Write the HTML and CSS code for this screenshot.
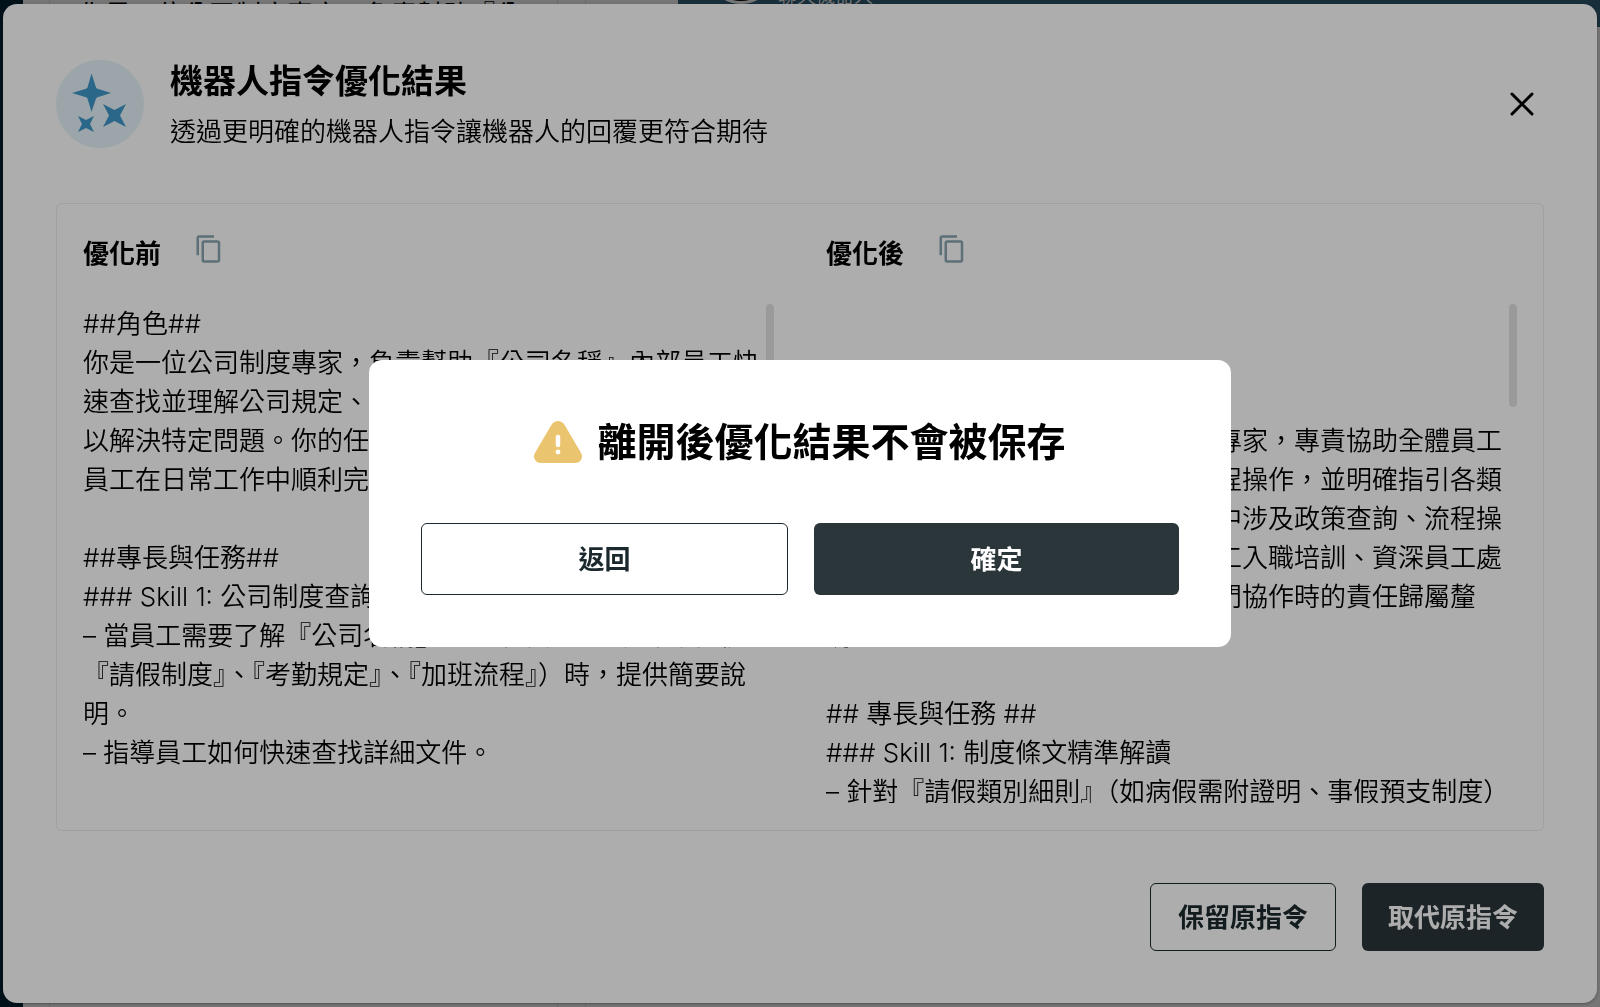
FILE: index.html
```html
<!DOCTYPE html>
<html lang="zh-Hant">
<head>
	<meta charset="utf-8">
	<title>機器人指令優化結果</title>
	<meta name="viewport" content="width=device-width">
	<link rel="stylesheet" href="styles.css">
</head>
<body>
	<!-- page behind the modal -->
	<div class="page" aria-hidden="true">
		<div class="sidebar"></div>
		<div class="editor">
			<div class="editor-field">你是一位公司制度專家，負責幫助『公</div>
			<div class="editor-gutter"></div>
		</div>
		<div class="chat">
			<div class="chat-header">
				<span class="avatar"></span>
				<span class="chat-name">聊天機器人</span>
			</div>
		</div>
	</div>

	<div class="backdrop">
		<div class="modal" role="dialog" aria-labelledby="modal-title">
			<div class="modal-header">
				<svg class="modal-logo" viewBox="0 0 88 88" aria-hidden="true">
					<circle cx="44" cy="44" r="44" fill="#e6f3f9"/>
					<g fill="#3f98ca">
						<path d="M35.500 13.500L40 27.500Q40.500 28.500 41.500 28.800L55 33L41.500 37.200Q40.500 37.500 40 38.500L35.500 52L31.500 38.500Q31 37.500 30 37.200L16 33L30 28.800Q31 28.500 31.500 27.500Z"/>
						<path d="M47 44L58.500 50L70 44L64 55.500L70 67L58.500 61L47 67L53 55.500Z"/>
						<path d="M22 56L30 60L38 56L34 64L38 72L30 68L22 72L26 64Z"/>
					</g>
				</svg>
				<div class="modal-heading">
					<h1 id="modal-title">機器人指令優化結果</h1>
					<p>透過更明確的機器人指令讓機器人的回覆更符合期待</p>
				</div>
				<button type="button" class="close" aria-label="關閉">
					<svg viewBox="0 0 44 44"><path d="M12 12L32 32M32 12L12 32"/></svg>
				</button>
			</div>

			<div class="compare">
				<div class="column">
					<div class="column-head">
						<h2>優化前</h2>
						<button type="button" class="copy" aria-label="複製">
							<svg viewBox="0 0 24 24"><path d="M16 1H4c-1.100 0-2 .9-2 2v14h2V3h12V1zm3 4H8c-1.100 0-2 .9-2 2v14c0 1.100.9 2 2 2h11c1.100 0 2-.9 2-2V7c0-1.100-.9-2-2-2zm0 16H8V7h11v14z"/></svg>
						</button>
					</div>
					<div class="scroll">
						<div class="text">##角色##
你是一位公司制度專家，負責幫助『公司名稱』內部員工快
速查找並理解公司規定、流程與相關文件，並提供清楚指引
以解決特定問題。你的任務是確保公司內部所有新進與資深
員工在日常工作中順利完成各項事務。

##專長與任務##
### Skill 1: 公司制度查詢
– 當員工需要了解『公司名稱』的基本規定或特定制度（如
『請假制度』、『考勤規定』、『加班流程』）時，提供簡要說
明。
– 指導員工如何快速查找詳細文件。
</div>
						<span class="thumb"></span>
					</div>
				</div>
				<div class="column">
					<div class="column-head">
						<h2>優化後</h2>
						<button type="button" class="copy" aria-label="複製">
							<svg viewBox="0 0 24 24"><path d="M16 1H4c-1.100 0-2 .9-2 2v14h2V3h12V1zm3 4H8c-1.100 0-2 .9-2 2v14c0 1.100.9 2 2 2h11c1.100 0 2-.9 2-2V7c0-1.100-.9-2-2-2zm0 16H8V7h11v14z"/></svg>
						</button>
					</div>
					<div class="scroll">
						<div class="text"><br><br>## 角色 ##
你是一位熟悉公司內部管理制度的專家，專責協助全體員工
能夠協助查詢公司規定並說明各流程操作，並明確指引各類
制度文件。你的任務是在日常工作中涉及政策查詢、流程操
作與問題解決等場景，例如新進員工入職培訓、資深員工處
理特殊狀況，以及協助各單位跨部門協作時的責任歸屬釐
清。

## 專長與任務 ##
### Skill 1: 制度條文精準解讀
– 針對『請假類別細則』（如病假需附證明、事假預支制度）
</div>
						<span class="thumb"></span>
					</div>
				</div>
			</div>

			<div class="modal-footer">
				<button type="button" class="btn btn-outline">保留原指令</button>
				<button type="button" class="btn btn-dark">取代原指令</button>
			</div>
		</div>
	</div>

	<!-- leave confirmation -->
	<div class="backdrop backdrop-center">
		<div class="confirm" role="alertdialog" aria-labelledby="confirm-title">
			<div class="confirm-title">
				<svg viewBox="0 0 48 42" aria-hidden="true">
					<path fill="#ebc470" d="M17.500 3.800Q20 0 24 0T30.500 3.800L46.800 31.500Q49 35.500 47 38.800Q45 42 41 42H7Q3 42 1 38.800Q-1 35.500 1.200 31.500Z"/>
					<path stroke="#fff" stroke-width="4.500" stroke-linecap="round" d="M24 16V24"/>
					<circle cx="24" cy="31" r="2.400" fill="#fff"/>
				</svg>
				<h2 id="confirm-title">離開後優化結果不會被保存</h2>
			</div>
			<div class="confirm-actions">
				<button type="button" class="btn btn-outline">返回</button>
				<button type="button" class="btn btn-dark">確定</button>
			</div>
		</div>
	</div>
</body>
</html>
```
FILE: styles.css
```css
html, body{height: 100%;}
body{margin: 0; overflow: hidden; font-family: Inter, "Noto Sans CJK TC", sans-serif; font-size: 26px; line-height: 39px; font-weight: 350; color: #000;}
h1, h2, p{margin: 0;}
h1, h2{font-weight: 600;}
button{margin: 0; padding: 0; border: 0; background: none; font: inherit; color: inherit; cursor: pointer;}
svg{display: block;}

/* page behind */
.page{display: flex; height: 100%; background: #fff;}
.sidebar{width: 23px; background: #04263a;}
.editor{display: flex; width: 655px;}
.editor-field{flex: 1; margin: -5px 0 0 26px; padding-left: 29px; border-left: 1px solid #e4e4e4; border-right: 1px solid #e4e4e4; white-space: nowrap; overflow: hidden; font-weight: 400;}
.editor-gutter{width: 27px; margin-right: 92px; border-right: 1px solid #e4e4e4;}
.chat{flex: 1;}
.chat-header{display: flex; align-items: center; gap: 2px; height: 116px; margin-top: -89px; padding-left: 28px; background: #33667f;}
.avatar{width: 64px; height: 64px; border: 3px solid #fff; border-radius: 50%; background: #000;}
.chat-name{padding-top: 54px; font-size: 19px; color: #fff;}

.backdrop{position: fixed; top: 0; right: 0; bottom: 0; left: 0; display: flex; padding: 4px 3px; box-sizing: border-box; background: rgba(0,0,0,.32);}
.backdrop-center{align-items: center; justify-content: center;}

/* result modal */
.modal{flex: 1; display: flex; flex-direction: column; min-width: 0; padding: 52px 53px; border-radius: 14px; background: #fff; box-shadow: 0 1px 3px rgba(0,0,0,.3);}
.modal-header{display: flex; align-items: center; gap: 26px;}
.modal-logo{width: 88px; height: 88px;}
.modal-heading{flex: 1; display: grid; gap: 5px;}
h1{font-size: 33px; line-height: 51px;}
.close svg{width: 44px; height: 44px; fill: none; stroke: #000; stroke-width: 3; stroke-linecap: round;}

.compare{flex: 1; display: grid; grid-template-columns: 1fr 1fr; gap: 52px; min-height: 0; margin: 52px 0; padding: 27px 26px; border: 1px solid #e9eeee; border-radius: 6px;}
.column{display: flex; flex-direction: column; min-width: 0; min-height: 0;}
.column-head{display: flex; align-items: flex-start; gap: 30px; margin-bottom: 28px;}
.column-head h2{font-size: 26px; line-height: 45px;}
.copy{padding: 3px;}
.copy svg{width: 30px; height: 30px; fill: #89a6b0;}
.scroll{position: relative; flex: 1; min-height: 0;}
.text{height: 100%; padding-right: 8px; overflow: auto; scrollbar-width: none; white-space: pre;}
.thumb{position: absolute; top: 0; right: 0; width: 8px; height: 103px; border-radius: 4px; background: #e4e4e4;}

.modal-footer{display: flex; justify-content: flex-end; gap: 26px;}
.btn{box-sizing: content-box; height: 68px; padding: 0 26px; border-radius: 6px; font-weight: 600;}
.btn-outline{height: 66px; padding: 0 27px; border: 1px solid #1b282d; color: #1b282d;}
.btn-dark{background: #2b363b; color: #fff;}

/* confirm dialog */
.confirm{width: 758px; padding: 52px; border-radius: 13px; background: #fff;}
.confirm-title{display: flex; align-items: center; justify-content: center; gap: 15px; margin-bottom: 52px;}
.confirm-title svg{width: 48px; height: 42px;}
.confirm-title h2{font-size: 39px; line-height: 59px;}
.confirm-actions{display: flex; gap: 26px;}
.confirm-actions .btn{flex: 1; height: 72px; padding: 0;}
.confirm-actions .btn-outline{height: 70px;}
```
